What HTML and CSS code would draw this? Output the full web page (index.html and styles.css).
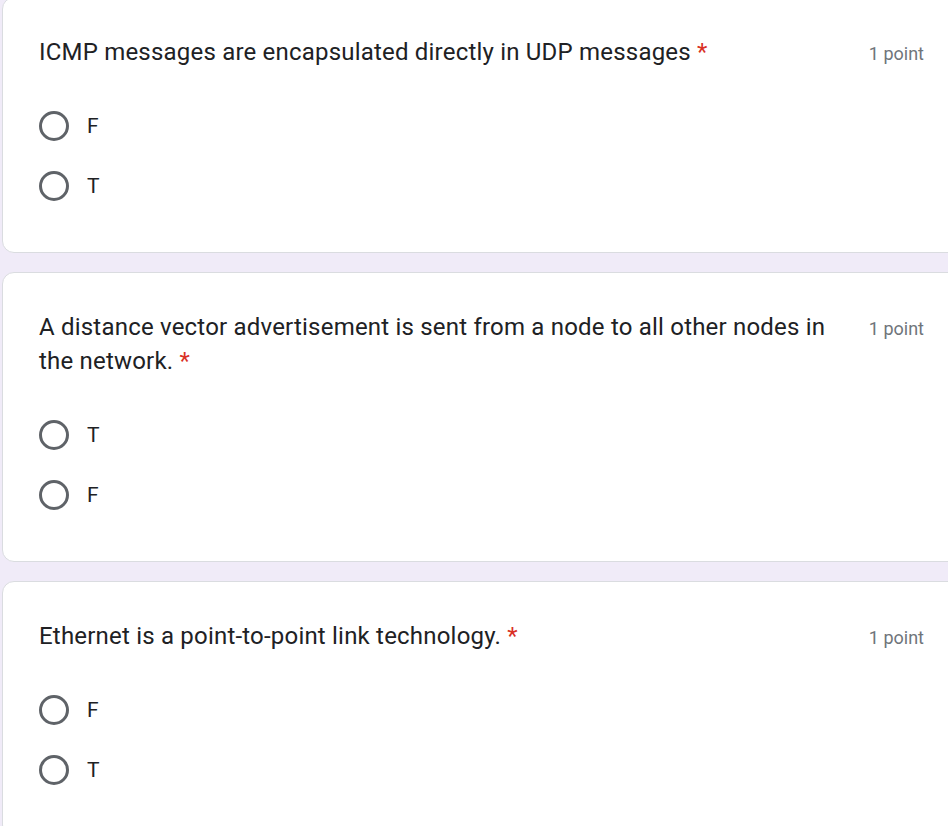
FILE: index.html
```html
<!DOCTYPE html>
<html lang="en">
<head>
<meta charset="utf-8">
<title>Quiz</title>
<link rel="stylesheet" href="styles.css">
</head>
<body>
<main class="form">
  <section class="card card-first">
    <div class="q-head">
      <div class="q-title">ICMP messages are encapsulated directly in UDP messages <span class="req">*</span></div>
      <div class="q-points">1 point</div>
    </div>
    <div class="options">
      <label class="option"><span class="radio"></span><span class="opt-label">F</span></label>
      <label class="option"><span class="radio"></span><span class="opt-label">T</span></label>
    </div>
  </section>
  <section class="card">
    <div class="q-head">
      <div class="q-title">A distance vector advertisement is sent from a node to all other nodes in the network. <span class="req">*</span></div>
      <div class="q-points">1 point</div>
    </div>
    <div class="options">
      <label class="option"><span class="radio"></span><span class="opt-label">T</span></label>
      <label class="option"><span class="radio"></span><span class="opt-label">F</span></label>
    </div>
  </section>
  <section class="card">
    <div class="q-head">
      <div class="q-title">Ethernet is a point-to-point link technology. <span class="req">*</span></div>
      <div class="q-points">1 point</div>
    </div>
    <div class="options">
      <label class="option"><span class="radio"></span><span class="opt-label">F</span></label>
      <label class="option"><span class="radio"></span><span class="opt-label">T</span></label>
    </div>
  </section>
</main>
</body>
</html>
```
FILE: styles.css
```css
html, body {
  margin: 0;
  padding: 0;
  overflow: hidden;
  background: #f0ebf8;
}
body {
  font-family: Roboto, "Liberation Sans", Arial, sans-serif;
  color: #202124;
}
.form {
  display: flex;
  flex-direction: column;
  gap: 19px;
  margin-top: -3px;
  padding-left: 2px;
  width: 959px;
}
.card {
  box-sizing: border-box;
  width: 959px;
  background: #fff;
  border: 1px solid #dadce0;
  border-radius: 12px;
  padding: 37px 36px 36px 36px;
}
.q-head {
  display: flex;
  align-items: baseline;
  gap: 24px;
}
.q-title {
  flex: 1;
  font-size: 24px;
  line-height: 34px;
  letter-spacing: 0.2px;
}
.req {
  color: #d93025;
}
.q-points {
  font-size: 18px;
  line-height: 24px;
  color: #70757a;
  white-space: nowrap;
}
.options {
  display: flex;
  flex-direction: column;
  margin-top: 27px;
}
.option {
  display: flex;
  align-items: center;
  height: 60px;
}
.radio {
  box-sizing: border-box;
  width: 30px;
  height: 30px;
  border: 3px solid #5f6368;
  border-radius: 50%;
  flex: none;
}
.opt-label {
  margin-left: 18px;
  font-size: 21px;
  line-height: 30px;
  color: #202124;
}
```
